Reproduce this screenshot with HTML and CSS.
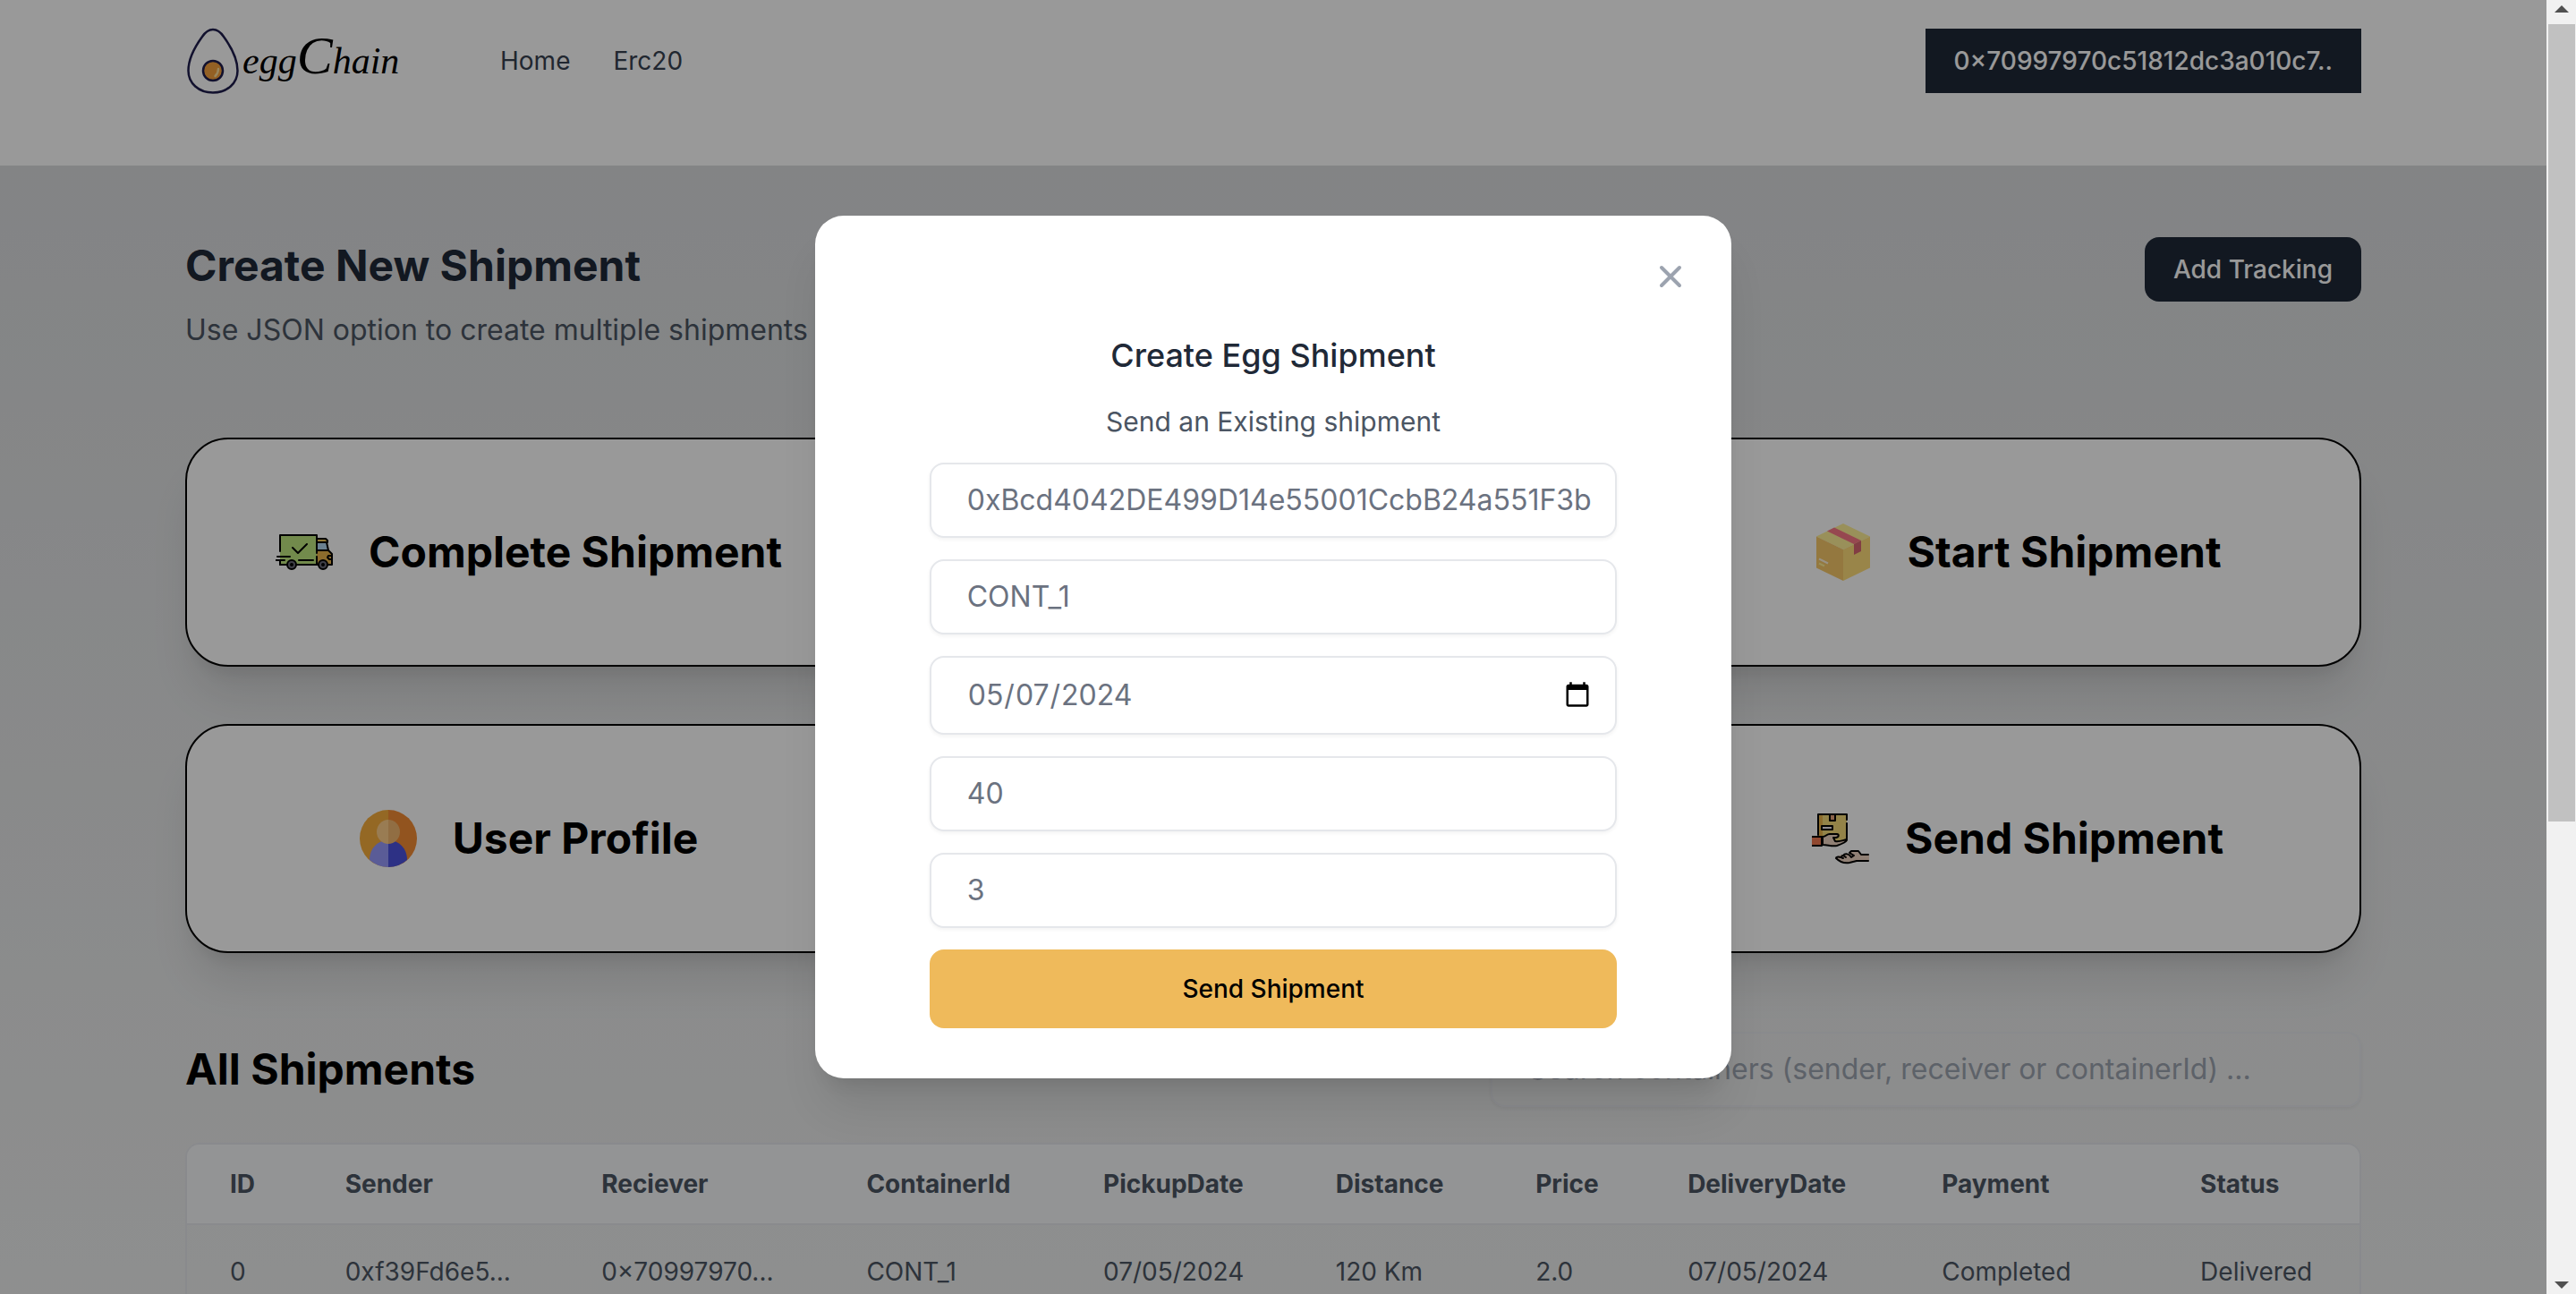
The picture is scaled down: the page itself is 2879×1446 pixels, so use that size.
FILE: index.html
```html
<!DOCTYPE html>
<html lang="en">
<head>
  <meta charset="utf-8">
  <meta name="viewport" content="width=device-width, initial-scale=1">
  <title>eggChain</title>
  <link rel="stylesheet" href="styles.css">
</head>
<body>
  <div class="window">
    <div class="page">
      <header class="header">
        <nav class="container nav">
          <a class="logo" href="#" aria-label="eggChain">
            <svg class="logo-egg" viewBox="0 0 58 74" fill="none" aria-hidden="true">
              <path d="M29 2C24 2 21 4 17 10C9 21 1.500 35 1.500 48C1.500 62 13 72.500 29 72.500S56.500 62 56.500 48C56.500 35 49 21 41 10C37 4 34 2 29 2Z" stroke="#1f1d4d" stroke-width="2.500"/>
              <circle cx="29" cy="48" r="11" fill="#f5a03c" stroke="#1f1d4d" stroke-width="2.500"/>
              <path d="M35 46C35 49 33.500 52 31.500 54" stroke="#ffdf9a" stroke-width="2.500" stroke-linecap="round"/>
            </svg>
            <span class="logo-text">egg<span class="logo-cap">C</span>hain</span>
          </a>
          <div class="nav-links">
            <a href="#">Home</a>
            <a href="#">Erc20</a>
          </div>
          <button class="btn-dark" type="button">0×70997970c51812dc3a010c7..</button>
        </nav>
      </header>

      <main class="main">
        <div class="container">
          <div class="intro">
            <div>
              <h1 class="heading">Create New Shipment</h1>
              <p class="lead">Use JSON option to create multiple shipments</p>
            </div>
            <button class="btn-dark btn-round" type="button">Add Tracking</button>
          </div>

          <div class="services">
            <button class="card" type="button">
              <svg class="card-icon" viewBox="0 0 64 64" fill="none" stroke="#000" stroke-width="2" stroke-linecap="round" stroke-linejoin="round" aria-hidden="true">
                <path d="M5 13H46V46H5Z" fill="#bfe67f" stroke="none"/>
                <path d="M46 17H56L58 20V21H46Z" fill="#f0c85a" stroke="none"/>
                <path d="M46 21H57L59 30H46Z" fill="#b1d5f0" stroke="none"/>
                <path d="M46 30H59L63 34V46H46Z" fill="#e9b44c" stroke="none"/>
                <path d="M5 31V13H46V33M5 46V42M46 37V46"/>
                <path d="M46 17H56L58 19V21H46M57 21L59 30H46M59 30L63 34V46H59M63 36H59L58 38L60 40H63M46 46H47"/>
                <path d="M2 37H16M0 41H10M5 46H12M26 41H42M24 46H46"/>
                <path d="M19 27L25 33L35 23"/>
                <circle cx="18" cy="46" r="5" fill="#6a6a78"/>
                <circle cx="53" cy="46" r="5" fill="#6a6a78"/>
                <circle cx="18" cy="46" r="1"/>
                <circle cx="53" cy="46" r="1"/>
              </svg>
              <span>Complete Shipment</span>
            </button>
            <button class="card card-end" type="button">
              <svg class="card-icon" viewBox="0 0 64 64" aria-hidden="true">
                <path d="M32 0L62 14.500L32 29L2 14.500Z" fill="#fff096"/>
                <path d="M2 14.500L32 29V64L2 49.500Z" fill="#f7c869"/>
                <path d="M62 14.500L32 29V64L62 49.500Z" fill="#ffde7b"/>
                <path d="M14 8.500L22 4.500L52 19L44 23Z" fill="#fa7886"/>
                <path d="M44 23L52 19V31L44 35Z" fill="#d96771"/>
                <path d="M5 39.500L15 44.500" stroke="#fff4dc" stroke-width="2"/>
                <path d="M5 44.500L11 47.500" stroke="#fff096" stroke-width="2"/>
              </svg>
              <span>Start Shipment</span>
            </button>
            <button class="card" type="button">
              <svg class="card-icon" viewBox="0 0 64 64" aria-hidden="true">
                <path d="M32 0A32 32 0 0 0 32 64Z" fill="#f7ad3c"/>
                <path d="M32 0A32 32 0 0 1 32 64Z" fill="#f38c35"/>
                <path d="M32 34C20 34 11 43 11 56A32 32 0 0 0 32 64Z" fill="#9699fc"/>
                <path d="M32 34C44 34 53 43 53 56A32 32 0 0 1 32 64Z" fill="#4b53de"/>
                <path d="M32 11A13 13.500 0 0 0 32 38Z" fill="#ffcf8a"/>
                <path d="M32 11A13 13.500 0 0 1 32 38Z" fill="#f2b771"/>
              </svg>
              <span>User Profile</span>
            </button>
            <button class="card card-end" type="button">
              <svg class="card-icon" viewBox="0 0 64 64" fill="none" stroke="#000" stroke-width="2" stroke-linecap="round" stroke-linejoin="round" aria-hidden="true">
                <path d="M7 5H39V36H7Z" fill="#f5da78" stroke="none"/>
                <path d="M7 5H12V30H7Z" fill="#e9b44c" stroke="none"/>
                <path d="M7 28V5H39V11M39 15V32"/>
                <path d="M20 5H26V12H20Z" fill="#e8a47c"/>
                <path d="M11 18H23V22H11Z" fill="#f4ecf0"/>
                <path d="M12 30C16 30 16 27 20 27H28C30 27 31 30 27 31H24L26 35C31 36 34 34 39 33C40 35 34 38 28 40C22 41 18 39 12 39Z" fill="#f0d5c3"/>
                <path d="M0 30H12V40H0Z" fill="#f07850" stroke="none"/>
                <path d="M0 30H11V40H0"/>
                <path d="M64 50H55L52 46H44L42 48L45 50C41 49 38 48 35 50C31 50 28 52 27 54C31 58 36 60 42 59L50 57H64Z" fill="#f0d5c3" stroke="none"/>
                <path d="M63 50H55L52 46H44L42 48L47 51L44 53C42 49 37 48 35 51L38 53M35 51C33 51 32 54 35 54M32 53C29 52 27 53 27 54C31 58 36 60 42 59L50 57H63"/>
              </svg>
              <span>Send Shipment</span>
            </button>
          </div>

          <div class="list-head">
            <h2 class="heading heading-black">All Shipments</h2>
            <input class="search" type="search" aria-label="Search containers" placeholder="Search containers (sender, receiver or containerId) ...">
          </div>

          <div class="table-wrap">
            <table class="table">
              <colgroup>
                <col class="col-id"><col class="col-sender"><col class="col-receiver"><col class="col-container"><col class="col-pickup">
                <col class="col-distance"><col class="col-price"><col class="col-delivery"><col class="col-payment"><col>
              </colgroup>
              <thead>
                <tr>
                  <th>ID</th><th>Sender</th><th>Reciever</th><th>ContainerId</th><th>PickupDate</th>
                  <th>Distance</th><th>Price</th><th>DeliveryDate</th><th>Payment</th><th>Status</th>
                </tr>
              </thead>
              <tbody>
                <tr>
                  <td>0</td><td>0xf39Fd6e5...</td><td>0×70997970...</td><td>CONT_1</td><td>07/05/2024</td>
                  <td>120 Km</td><td>2.0</td><td>07/05/2024</td><td>Completed</td><td>Delivered</td>
                </tr>
              </tbody>
            </table>
          </div>
        </div>
      </main>

      <div class="overlay">
        <section class="modal" role="dialog" aria-modal="true" aria-labelledby="modal-title">
          <button class="close" type="button" aria-label="Close">
            <svg viewBox="0 0 40 40" fill="none" stroke="currentColor" stroke-width="4" stroke-linecap="round" aria-hidden="true">
              <path d="M10 10L30 30M30 10L10 30"/>
            </svg>
          </button>
          <h2 class="modal-title" id="modal-title">Create Egg Shipment</h2>
          <p class="modal-text">Send an Existing shipment</p>
          <form class="form">
            <input class="field" type="text" aria-label="Receiver" value="0xBcd4042DE499D14e55001CcbB24a551F3b">
            <input class="field" type="text" aria-label="Container ID" value="CONT_1">
            <input class="field field-date" type="date" aria-label="Pickup date" value="2024-05-07">
            <input class="field" type="text" aria-label="Distance" value="40">
            <input class="field" type="text" aria-label="Price" value="3">
            <button class="submit" type="button">Send Shipment</button>
          </form>
        </section>
      </div>
    </div>

    <div class="scrollbar" aria-hidden="true">
      <svg class="scroll-arrow" viewBox="0 0 16 8"><path d="M8 0L16 8H0Z" fill="#505050"/></svg>
      <div class="scroll-track"><div class="scroll-thumb"></div></div>
      <svg class="scroll-arrow" viewBox="0 0 16 8"><path d="M8 8L16 0H0Z" fill="#505050"/></svg>
    </div>
  </div>
</body>
</html>
```
FILE: styles.css
```css
*,
*::before,
*::after {
  box-sizing: border-box;
}

body {
  margin: 0;
  font-family: Inter, "Open Sans", sans-serif;
  font-size: 32px;
  line-height: 48px;
  color: #000;
}

h1, h2, p {
  margin: 0;
}

a {
  color: inherit;
  text-decoration: none;
}

button,
input {
  font: inherit;
}

button {
  border: 0;
  cursor: pointer;
}

svg {
  display: block;
}

.window {
  display: grid;
  grid-template-columns: minmax(0, 1fr) 33px;
  height: 100vh;
  overflow: hidden;
}

.page {
  position: relative;
  min-width: 0;
  height: 100vh;
  overflow: hidden;
  background: #fff;
}

.container {
  max-width: 2560px;
  margin: 0 auto;
  padding: 0 64px;
}

/* Header */

.header {
  padding: 32px 0 81px;
}

.nav {
  display: flex;
  align-items: center;
}

.logo {
  display: flex;
  align-items: center;
  gap: 4px;
  width: 352px;
}

.logo-egg {
  width: 58px;
  height: 74px;
  margin: -1px 0 -1px 2px;
}

.logo-text {
  font-family: "Liberation Serif", serif;
  font-style: italic;
  font-size: 42px;
  line-height: 72px;
}

.logo-cap {
  font-size: 60px;
  line-height: 48px;
}

.nav-links {
  display: flex;
  flex: 1;
  gap: 48px;
  font-size: 28px;
  line-height: 40px;
  color: #374151;
}

.btn-dark {
  padding: 16px 32px;
  background: #1f2937;
  color: #fff;
  font-size: 28px;
  font-weight: 500;
  line-height: 40px;
}

.btn-round {
  border-radius: 16px;
}

/* Main */

.main {
  min-height: 100vh;
  padding-top: 80px;
  background: linear-gradient(#dadcde, #eeefef 1300px);
}

.intro {
  display: flex;
  justify-content: space-between;
  align-items: flex-start;
  margin-bottom: 96px;
}

.heading {
  font-size: 48px;
  font-weight: 700;
  line-height: 64px;
  color: #1f2937;
}

.heading-black {
  color: #000;
}

.lead {
  margin-top: 16px;
  color: #4b5563;
}

.services {
  display: grid;
  grid-template-columns: repeat(3, minmax(0, 1fr));
  gap: 64px;
}

.card {
  display: flex;
  align-items: center;
  justify-content: center;
  gap: 40px;
  padding: 94px 32px;
  border: 2px solid #000;
  border-radius: 48px;
  background: #fff;
  box-shadow: 0 40px 50px -10px rgba(0, 0, 0, 0.1), 0 16px 20px -12px rgba(0, 0, 0, 0.1);
  color: #000;
  font-size: 48px;
  font-weight: 700;
  line-height: 64px;
}

.card-end {
  grid-column: 3;
}

.card-icon {
  width: 64px;
  height: 64px;
}

.list-head {
  display: flex;
  align-items: center;
  justify-content: space-between;
  margin: 88px 0 40px;
}

.search,
.field {
  min-width: 0;
  padding: 16px 24px 16px 40px;
  border: 2px solid #e5e7eb;
  border-radius: 16px;
  background: #fff;
  box-shadow: 0 2px 4px rgba(0, 0, 0, 0.05);
  color: #6b7280;
}

.field-date {
  min-height: 88px;
}

.search {
  width: 40%;
  appearance: none;
  background: transparent;
}

.search::placeholder {
  color: #9ca3af;
}

.table-wrap {
  overflow: hidden;
  border: 2px solid #e5e7eb;
  border-radius: 16px;
}

.table {
  width: 100%;
  table-layout: fixed;
  border-collapse: collapse;
  font-size: 28px;
  line-height: 40px;
  color: #4b5563;
  text-align: left;
}

.table th {
  padding: 24px 0 24px 48px;
  border-bottom: 2px solid #e5e7eb;
  background: #f6f7f9;
  font-weight: 700;
}

.table td {
  padding: 32px 0 32px 48px;
}

.col-id { width: 5.3%; }
.col-sender { width: 11.8%; }
.col-receiver { width: 12.2%; }
.col-container { width: 10.9%; }
.col-pickup { width: 10.7%; }
.col-distance { width: 9.2%; }
.col-price { width: 7%; }
.col-delivery { width: 11.7%; }
.col-payment { width: 11.9%; }

/* Modal */

.overlay {
  position: absolute;
  inset: 0;
  display: flex;
  align-items: center;
  justify-content: center;
  background: rgba(0, 0, 0, 0.4);
}

.modal {
  display: flex;
  flex-direction: column;
  width: 36%;
  padding: 48px 48px 56px;
  border-radius: 32px;
  background: #fff;
  box-shadow: 0 40px 50px -10px rgba(0, 0, 0, 0.1), 0 16px 20px -12px rgba(0, 0, 0, 0.1);
  text-align: center;
}

.close {
  align-self: flex-end;
  width: 40px;
  height: 40px;
  padding: 0;
  background: none;
  color: #9ca3af;
}

.modal-title {
  margin-top: 40px;
  font-size: 36px;
  font-weight: 500;
  line-height: 56px;
  color: #1f2937;
}

.modal-text {
  margin: 24px 0;
  font-size: 30px;
  line-height: 44px;
  color: #4b5563;
}

.form {
  display: flex;
  flex-direction: column;
  gap: 24px;
  padding: 0 80px;
}

.submit {
  padding: 24px 32px;
  border-radius: 16px;
  background: #efba5b;
  color: #000;
  font-size: 28px;
  font-weight: 500;
  line-height: 40px;
}

/* Scrollbar */

.scrollbar {
  display: flex;
  flex-direction: column;
  align-items: center;
  gap: 13px;
  padding: 6px 0;
  background: #f1f1f1;
}

.scroll-arrow {
  width: 16px;
  height: 8px;
}

.scroll-track {
  flex: 1;
  align-self: stretch;
  padding: 0 1px 0 2px;
}

.scroll-thumb {
  height: 64%;
  background: #c1c1c1;
}
```
